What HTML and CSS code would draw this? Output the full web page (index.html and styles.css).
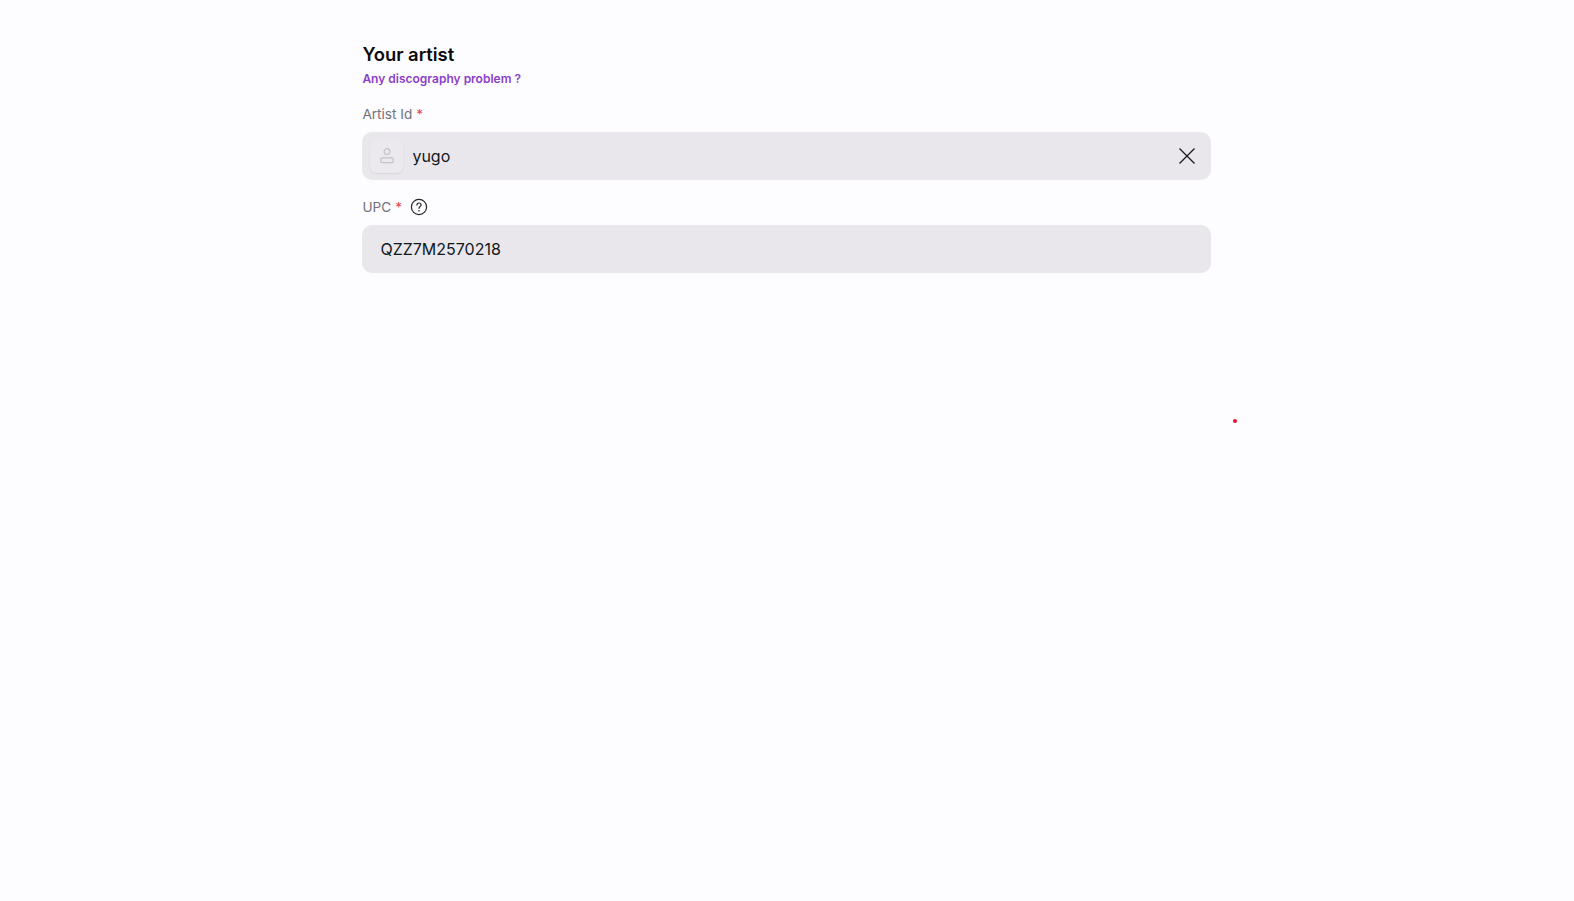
FILE: index.html
```html
<!DOCTYPE html>
<html lang="en">
<head>
<meta charset="UTF-8" />
<meta name="viewport" content="width=device-width, initial-scale=1" />
<title>Your artist</title>
<link rel="stylesheet" href="styles.css">
</head>
<body>
  <main class="form">
    <h2 class="titre">Your artist</h2>
    <a class="lien" href="#">Any discography problem ?</a>

    <div class="champ champ-artiste">
      <label class="label">Artist Id <span class="requis">*</span></label>
      <div class="input input-artiste">
        <span class="avatar">
          <svg width="18" height="18" viewBox="0 0 18 18" fill="none" stroke="#c4c3c7" stroke-width="1.2">
            <circle cx="9" cy="4.6" r="2.9" />
            <rect x="2.6" y="10.8" width="12.8" height="4.8" rx="2.2" />
          </svg>
        </span>
        <span class="valeur">yugo</span>
        <svg class="croix" width="18" height="18" viewBox="0 0 18 18" fill="none" stroke="#18181b" stroke-width="1.3">
          <path d="M1.5 1.5 L16.5 16.5 M16.5 1.5 L1.5 16.5" />
        </svg>
      </div>
    </div>

    <div class="champ">
      <label class="label">UPC <span class="requis">*</span>
        <svg class="aide" width="18" height="18" viewBox="0 0 18 18" fill="none" stroke="#27272a" stroke-width="1.2">
          <circle cx="9" cy="9" r="7.6" />
          <path d="M6.9 7.1 C6.9 5.8 7.9 5 9 5 C10.2 5 11.1 5.8 11.1 6.9 C11.1 8.4 9 8.5 9 10.3" stroke-linecap="round" />
          <circle cx="9" cy="12.8" r="0.5" fill="#27272a" stroke-width="0.5" />
        </svg>
      </label>
      <div class="input input-upc">
        <span class="valeur">QZZ7M2570218</span>
      </div>
    </div>
  </main>

  <span class="point"></span>
</body>
</html>
```

FILE: styles.css
```css
html, body {
  height: 100%;
}
body {
  margin: 0;
  background: #fdfcff;
  color: #11181c;
  font-family: Inter, 'Liberation Sans', sans-serif;
  overflow: hidden;
}
.form {
  width: 848.6px;
  margin-left: 362.4px;
  padding-top: 44px;
}
.titre {
  margin: 0;
  font-size: 18.4px;
  line-height: 20px;
  font-weight: 600;
  color: #0b0b0f;
}
.lien {
  display: block;
  margin-top: 6px;
  font-size: 12px;
  line-height: 18px;
  font-weight: 600;
  color: #8b3fc8;
  text-decoration: none;
}
.champ {
  margin-top: 15px;
}
.champ-artiste {
  margin-top: 14px;
}
.label {
  display: flex;
  align-items: center;
  gap: 4px;
  height: 24px;
  margin-bottom: 6px;
  font-size: 13.6px;
  color: #71717a;
}
.requis {
  color: #e5484d;
}
.aide {
  margin-left: 4px;
}
.input {
  display: flex;
  align-items: center;
  height: 48px;
  border-radius: 10px;
  background: #e9e7eb;
  font-size: 16px;
}
.input-artiste {
  padding: 0 15px 0 8px;
}
.input-upc {
  padding: 0 18px;
}
.avatar {
  display: flex;
  align-items: center;
  justify-content: center;
  width: 33px;
  height: 33px;
  margin-right: 9px;
  border-radius: 6px;
  background: #ebe9ed;
  box-shadow: 0 1px 2px rgba(0, 0, 0, 0.08);
}
.valeur {
  flex: 1;
}
.point {
  position: absolute;
  left: 1232.5px;
  top: 419px;
  width: 4px;
  height: 4px;
  border-radius: 50%;
  background: #e0142c;
}
```
